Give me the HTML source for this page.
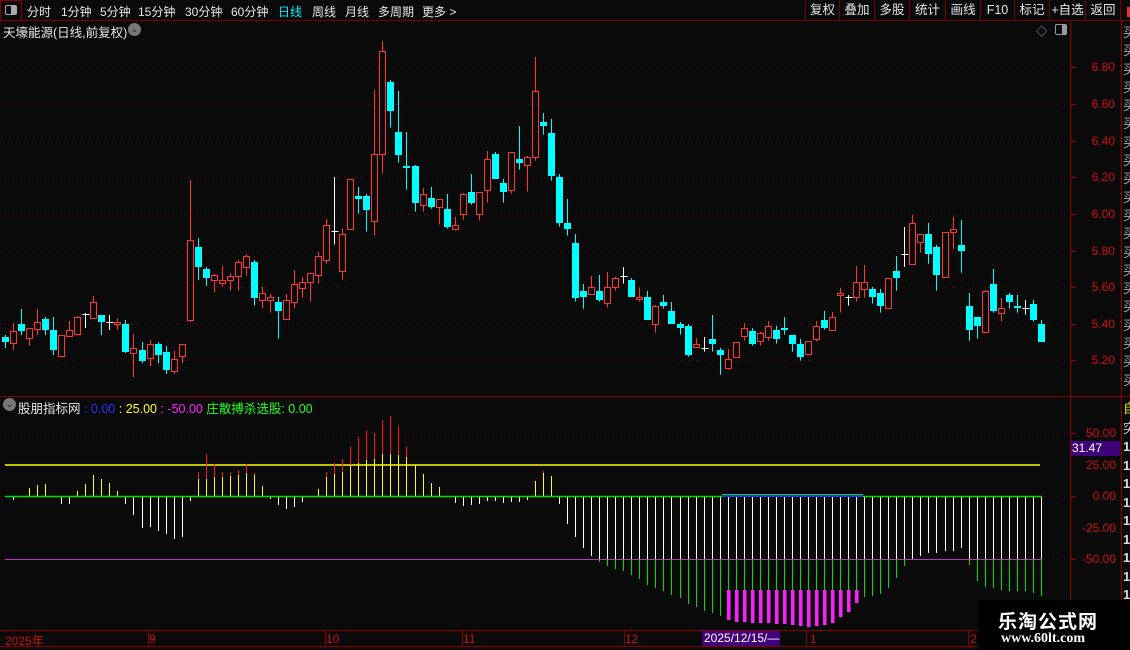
<!DOCTYPE html>
<html><head><meta charset="utf-8">
<style>
*{margin:0;padding:0;box-sizing:border-box}
body{width:1130px;height:650px;background:#0a0a0a;overflow:hidden;position:relative;font-family:"Liberation Sans","Noto Sans CJK SC",sans-serif;font-size:12px;color:#e6e6e6}
.a{position:absolute;white-space:nowrap}
.tb{top:0;left:0;width:1130px;height:21px;border-bottom:1px solid #7a0000}
.m{position:absolute;top:3px;font-size:12px}
.btn{position:absolute;top:0;height:20px;line-height:20px;text-align:center;border-left:1px solid #7a0000;font-size:12.5px}
.ax{color:#d01010;font-size:12px;text-align:right;width:50px}
.rc{color:#ddd;font-size:13px;font-weight:bold}
</style></head><body>
<div class="a tb"></div>
<div class="a" style="left:0;top:0;width:22px;height:21px;border:1px solid #8a0000"></div>
<div class="a" style="left:5px;top:5px;width:12px;height:10px;border:1.5px solid #aaa;border-radius:2px"><div style="position:absolute;right:0;top:0;width:5px;height:100%;background:#aaa"></div></div>
<span class="m" style="left:27px">分时</span><span class="m" style="left:61px">1分钟</span><span class="m" style="left:100px">5分钟</span><span class="m" style="left:138px">15分钟</span><span class="m" style="left:185px">30分钟</span><span class="m" style="left:231px">60分钟</span><span class="m" style="left:278px;color:#00f0ff">日线</span><span class="m" style="left:312px">周线</span><span class="m" style="left:345px">月线</span><span class="m" style="left:378px">多周期</span><span class="m" style="left:422px">更多 &gt;</span>
<div class="btn" style="left:805px;width:34px">复权</div>
<div class="btn" style="left:839px;width:35px">叠加</div>
<div class="btn" style="left:874px;width:35px">多股</div>
<div class="btn" style="left:909px;width:36px">统计</div>
<div class="btn" style="left:945px;width:35px">画线</div>
<div class="btn" style="left:980px;width:34px">F10</div>
<div class="btn" style="left:1014px;width:35px">标记</div>
<div class="btn" style="left:1049px;width:36px">+自选</div>
<div class="btn" style="left:1085px;width:36px;border-right:1px solid #7a0000">返回</div>
<div class="a" style="left:1127px;top:7px;width:4px;height:10px;background:#e03030"></div>
<div class="a" style="left:3px;top:22px;font-size:12.5px">天壕能源(日线,前复权)</div>
<div class="a" style="left:128px;top:23px;width:13px;height:13px;border-radius:50%;background:#777;color:#222;font-size:9px;line-height:13px;text-align:center">⌄</div>
<div class="a" style="left:1036px;top:23px;color:#999;font-size:11px">◇</div>
<div class="a" style="left:1055px;top:24px;width:12px;height:11px;border:1.5px solid #999;border-radius:2px"><div style="position:absolute;right:0;top:0;width:4px;height:100%;background:#999"></div></div>

<div class="a" style="left:3px;top:398px;width:13px;height:13px;border-radius:50%;background:#777;color:#222;font-size:9px;line-height:13px;text-align:center">⌄</div>
<div class="a" style="left:18px;top:398px;font-size:12.5px">股朋指标网 <span style="color:#2030ff">: 0.00</span> <span style="color:#ffff20">: 25.00</span> <span style="color:#ff20ff">: -50.00</span> <span style="color:#20ff20">庄散搏杀选股: 0.00</span></div>

<svg class="a" style="left:0;top:0" width="1130" height="650" id="sv"></svg>

<div class="a ax" style="left:1065px;top:60px">6.80</div>
<div class="a ax" style="left:1065px;top:97px">6.60</div>
<div class="a ax" style="left:1065px;top:134px">6.40</div>
<div class="a ax" style="left:1065px;top:170px">6.20</div>
<div class="a ax" style="left:1065px;top:207px">6.00</div>
<div class="a ax" style="left:1065px;top:244px">5.80</div>
<div class="a ax" style="left:1065px;top:280px">5.60</div>
<div class="a ax" style="left:1065px;top:317px">5.40</div>
<div class="a ax" style="left:1065px;top:353px">5.20</div>

<div class="a ax" style="left:1066px;top:426px">50.00</div>
<div class="a" style="left:1071px;top:441px;width:49px;height:15px;background:#40007a;color:#fff;font-size:12px;line-height:15px;padding-left:1px">31.47</div>
<div class="a ax" style="left:1066px;top:458px">25.00</div>
<div class="a ax" style="left:1066px;top:489px">0.00</div>
<div class="a ax" style="left:1066px;top:521px">-25.00</div>
<div class="a ax" style="left:1066px;top:552px">-50.00</div>

<div class="a" style="left:1123px;top:24px;width:7px;height:370px;overflow:hidden;color:#aaa;font-size:13px;line-height:18.3px;white-space:normal;word-break:break-all">买买买买买买买买买买买买买买买买买买买买</div>
<div class="a" style="left:1123px;top:398px;width:7px;overflow:hidden;color:#e0e000;font-size:13px">自</div>
<div class="a" style="left:1123px;top:418px;width:7px;overflow:hidden;color:#ccc;font-size:13px">突</div>
<div class="a rc" style="left:1123px;top:438px;width:7px;overflow:hidden;line-height:18.5px;white-space:normal">1 1 1 1 1 1 1 1 1</div>

<div class="a" style="left:5px;top:632px;color:#d01010;font-size:12px">2025年</div>
<div class="a" style="left:149px;top:632px;color:#d01010">9</div>
<div class="a" style="left:326px;top:632px;color:#d01010">10</div>
<div class="a" style="left:463px;top:632px;color:#d01010">11</div>
<div class="a" style="left:625px;top:632px;color:#d01010">12</div>
<div class="a" style="left:702px;top:631px;width:78px;height:15px;background:#40007a;color:#fff;line-height:15px;padding-left:2px">2025/12/15/—</div>
<div class="a" style="left:810px;top:632px;color:#d01010">1</div>
<div class="a" style="left:970px;top:632px;color:#d01010">2</div>

<div class="a" style="left:978px;top:600px;width:152px;height:50px;background:#000"></div>
<div class="a" style="left:998px;top:607px;color:#fff;font-size:19px;font-weight:bold;letter-spacing:1px">乐淘公式网</div>
<div class="a" style="left:1001px;top:631px;color:#fff;font-size:14px;font-weight:bold;font-family:'Liberation Serif',serif">www.60lt.com</div>

<script>
var s='',R='#ff3434',C='#00ffff',W='#ffffff';
function L(x1,y1,x2,y2,c,w,d){s+='<line x1="'+x1+'" y1="'+y1+'" x2="'+x2+'" y2="'+y2+'" stroke="'+c+'" stroke-width="'+(w||1)+'"'+(d?' stroke-dasharray="'+d+'"':'')+'/>';}
[67,104,141,177,214,251,287,324,360].forEach(function(y){L(0,y+.5,1068,y+.5,'#5a0a0a',1,'1 3');L(1071,y+.5,1076,y+.5,'#a00000');});
[433,496,559].forEach(function(y){L(0,y+.5,1068,y+.5,'#5a0a0a',1,'1 3');L(1071,y+.5,1076,y+.5,'#a00000');});
L(1070.5,21,1070.5,646,'#8a0000');L(1121.5,21,1121.5,646,'#8a0000');
L(0,396.5,1130,396.5,'#8a0000');L(0,630.5,978,630.5,'#8a0000');L(0,646.5,978,646.5,'#8a0000');
[148,325,462,624,806,968].forEach(function(x){L(x+.5,631,x+.5,646,'#8a0000');});
var A=[['C',171,186,165,204],['R',153,188,129,210],['C',132,153,87,165],['R',145,173,145,198],['R',126,146,87,165],['C',117,150,111,165],['C',150,210,111,225],['R',165,228,165,231],['R',150,167,123,167],['R',111,161,108,165],['W',102,102,99,144],['R',66,113,48,117],['C',105,126,105,165],['W',127,127,105,150],['R',126,133,114,150],['C',132,216,120,219],['R',204,218,162,291],['C',210,243,186,249],['R',192,234,180,258],['C',192,225,186,249],['C',216,270,198,282],['R',237,272,213,282],['R',192,227,192,249]];
var B=[['R',630,870,450,876],['C',651,710,624,750],['C',717,743,711,768],['R',736,751,732,788],['R',750,758,708,770],['R',739,751,730,782],['R',697,739,690,782],['R',679,712,672,737],['C',696,803,690,827],['R',790,811,771,836],['R',802,811,792,848],['C',817,842,801,926],['R',811,868,792,868],['R',763,817,720,836],['R',757,773,741,803],['R',730,757,730,815],['R',679,736,666,761],['R',586,691,567,701],['W',604,604,441,644],['R',613,724,595,749],['R',448,598,448,598],['C',498,506,471,551],['C',498,539,492,605],['R',373,574,180,617],['R',64,373,33,431],['C',156,242,150,293],['C',306,374,183,398],['C',408,412,306,479],['C',408,518,405,545],['R',492,526,474,545],['C',505,530,471,536],['R',508,532,508,584],['C',538,590,492,596],['R',586,598,561,602],['R',492,553,489,569],['C',486,518,432,524],['R',486,553,486,572],['R',388,481,363,518],['C',372,446,366,446],['C',459,485,447,518],['R',367,481,367,491],['C',387,398,288,419],['R',381,406,378,485],['R',184,382,81,392],['C',276,287,249,314],['C',309,437,267,452],['C',441,578,432,590],['C',579,596,507,617],['C',639,803,612,815],['C',783,800,762,836],['R',771,791,738,795],['C',783,809,735,815]];
var D=[['R',262,308,216,323],['R',235,260,230,272],['W',229,229,201,251],['C',240,290,234,290],['R',292,296,262,305],['C',291,359,273,359],['R',319,373,315,398],['C',306,317,285,326],['C',333,371,306,371],['C',372,383,366,404],['C',378,464,372,470],['R',433,440,414,443],['W',445,445,411,455],['C',417,431,345,455],['C',450,464,444,524],['R',478,505,447,509],['R',427,472,427,472],['R',385,407,369,422],['C',393,431,384,437],['R',400,424,396,437],['R',379,412,363,422],['C',390,416,378,431],['C',384,389,351,404],['C',405,431,405,455],['C',432,470,417,482],['R',424,461,424,464],['R',379,418,363,425],['C',360,383,333,389],['R',352,391,336,391],['R',280,286,264,338],['W',290,290,285,317],['R',247,292,198,305],['R',247,268,195,293],['C',267,290,261,311],['C',279,317,267,338],['R',235,325,235,325],['C',213,233,168,272],['W',162,162,81,201],['R',70,193,45,193],['R',103,127,103,158],['C',102,161,69,191],['C',141,224,135,272],['R',97,230,97,233],['R',88,97,51,146],['C',135,152,60,218],['C',318,389,279,422],['C',351,377,351,416],['R',273,395,270,395],['C',252,332,207,338],['R',325,340,294,365],['C',285,305,279,326],['C',319,323,285,338],['W',325,325,300,344],['C',312,359,300,365],['C',372,425,360,425]];
var all=[];A.forEach(function(a){all.push([a[0],280+a[1]/3,280+a[2]/3,280+a[3]/3,280+a[4]/3]);});
B.forEach(function(a){all.push([a[0],30+a[1]/3,30+a[2]/3,30+a[3]/3,30+a[4]/3]);});
D.forEach(function(a){all.push([a[0],200+a[1]/3,200+a[2]/3,200+a[3]/3,200+a[4]/3]);});
function X(i){return Math.round(5+i*8.03);}
all.forEach(function(c,i){var x=X(i)+.5,t=Math.round(c[1]),b=Math.round(c[2]);
 if(c[0]=='W'){L(x,c[3],x,c[4],W);L(x-3,t+.5,x+4,t+.5,W);return;}
 var col=c[0]=='R'?R:C;
 if(c[0]=='R'){L(x,c[3],x,t,col);L(x,b,x,c[4],col);s+='<rect x="'+(x-3)+'" y="'+(t+.5)+'" width="6" height="'+Math.max(1,b-t)+'" fill="none" stroke="'+col+'"/>';}
 else{L(x,c[3],x,c[4],col);s+='<rect x="'+(x-3.5)+'" y="'+t+'" width="7" height="'+Math.max(2,b-t)+'" fill="'+col+'"/>';}
});
var V=[0,-4,0,8,11,12,0,-8,-8,5,12,21,17,13,5,-8,-19,-32,-31,-35,-38,-43,-41,-5,[17,24],[17,42],[19,32],[19,24],[20,24],[21,26],[23,32],[21,23],10,-3,-9,-13,-11,-6,0,7,[19,24],[22,33],[24,37],[31,49],[33,59],[36,65],[37,63],[42,76],[42,80],[41,70],[39,49],31,22,13,9,0,-7,-10,-9,-8,-5,-5,-7,-6,-6,-4,15,[23,25],20,-8,
-28,-41,-52,-60,-66,-70,-73,-75,-79,-83,-89,-92,-95,-99,-102,-108,-111,-115,-117,-120,
-124,-126,-126,-127,-127,-127,-128,-128,-129,-130,-131,-130,-129,-127,-121,-116,-107,
-101,-100,-98,-92,-82,-70,-63,-60,-57,-57,-55,-55,-52,-69,-85,-91,-92,-94,-95,-95,-95,-97,-100];
L(5,465,1040,465,'#ffff00',1.5);L(5,559.5,1042,559.5,'#c030c0',1);
V.forEach(function(v,i){var x=X(i)+.5;
 if(v instanceof Array){L(x,496,x,496-v[0],'#ffff00');L(x,496-v[0],x,496-v[1],'#ff1010');return;}
 if(v>0){L(x,496,x,496-v,'#ffff00');return;}
 if(v<0){var yb=496-v;
  if(yb<=559)L(x,496,x,yb,W);else{L(x,496,x,559,W);
   if(i>=90&&i<=106){L(x,559,x,590,'#00e000');s+='<rect x="'+(x-1.5)+'" y="590" width="3.5" height="'+(yb-590)+'" fill="#ff20ff"/>';}
   else L(x,559,x,yb,'#00e000');}
 }
});
L(5,496.5,722,496.5,'#00e000',1.5);L(722,494.5,863,494.5,'#00e000',1);L(722,496,863,496,'#2030ff',2);L(863,496.5,1042,496.5,'#00e000',1.5);
document.getElementById('sv').innerHTML=s;
</script>
</body></html>
